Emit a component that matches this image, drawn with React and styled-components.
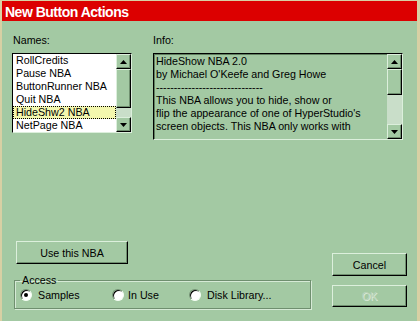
import React from 'react'
import styled, { createGlobalStyle } from 'styled-components'

const GlobalStyle = createGlobalStyle`
  html, body {
    margin: 0;
    padding: 0;
    background: #a3c9a3;
  }
  body {
    font-family: "Liberation Sans", Arial, sans-serif;
  }
`

const names = ['RollCredits', 'Pause NBA', 'ButtonRunner NBA', 'Quit NBA', 'HideShw2 NBA', 'NetPage NBA']

const infoLines = [
  'HideShow NBA 2.0',
  "by Michael O'Keefe and Greg Howe",
  '------------------------------',
  'This NBA allows you to hide, show or',
  "flip the appearance of one of HyperStudio's",
  'screen objects. This NBA only works with',
]

const Arrow = ({ down }) => (
  <svg width="7" height="4" viewBox="0 0 7 4">
    <polygon points={down ? '0,0 7,0 3.5,4' : '0,4 3.5,0 7,4'} fill="#000" />
  </svg>
)

const ScrollBar = ({ thumb }) => (
  <Scroll>
    <Raised $h={15}><Arrow /></Raised>
    <Raised $h={thumb} />
    <Track />
    <Raised $h={15}><Arrow down /></Raised>
  </Scroll>
)

const App = () => {
  return (
    <Window>
      <GlobalStyle />
      <TitleBar>New Button Actions</TitleBar>
      <TopRow>
        <Column>
          <Label $indent={1}>Names:</Label>
          <ListBox>
            <Items>
              {names.map((n, i) => (
                <Item key={n} $selected={i === 4}>{n}</Item>
              ))}
            </Items>
            <ScrollBar thumb={39} />
          </ListBox>
        </Column>
        <Column>
          <Label>Info:</Label>
          <InfoBox>
            <InfoText>
              {infoLines.map((l, i) => (
                <div key={i}>{l}</div>
              ))}
            </InfoText>
            <ScrollBar thumb={26} />
          </InfoBox>
        </Column>
      </TopRow>
      <BottomRow>
        <LeftCol>
          <UseButton>Use this NBA</UseButton>
          <Group>
            <legend>Access</legend>
            <RadioRow>
              <Option $gap={6}><Radio $checked />Samples</Option>
              <Option $gap={4}><Radio />In Use</Option>
              <Option $gap={6}><Radio />Disk Library...</Option>
            </RadioRow>
          </Group>
        </LeftCol>
        <RightCol>
          <DialogButton $h={23}>Cancel</DialogButton>
          <DialogButton $h={22} $disabled>OK</DialogButton>
        </RightCol>
      </BottomRow>
    </Window>
  )
}

const Window = styled.div`
  width: 420px;
  height: 321px;
  box-sizing: border-box;
  background: #a3c9a3;
  box-shadow: inset 2px 1px 0 #d8d0a4, inset -3px 0 0 #d8d0a4;
  font-size: 10.7px;
  color: #000;
  overflow: hidden;
`

const TitleBar = styled.div`
  margin: 1px 3px 0 2px;
  height: 20px;
  box-sizing: border-box;
  padding: 1px 0 0 3px;
  background: #dc0000;
  color: #fff;
  font-weight: bold;
  font-size: 14px;
  letter-spacing: -0.5px;
  line-height: 20px;
  white-space: nowrap;
`

const TopRow = styled.div`
  display: grid;
  grid-template-columns: 120px 250px;
  column-gap: 21px;
  align-items: start;
  padding: 13px 0 0 12px;
`

const Column = styled.div`
  display: flex;
  flex-direction: column;
`

const Label = styled.div`
  line-height: 13px;
  margin-bottom: 6px;
  padding-left: ${(p) => p.$indent || 0}px;
`

const ListBox = styled.div`
  display: flex;
  height: 80px;
  box-sizing: border-box;
  border: 1px solid;
  border-color: #000 #dcefdc #dcefdc #000;
  background: #fff;
`

const Items = styled.div`
  flex: 1;
  overflow: hidden;
`

const Item = styled.div`
  height: 13px;
  line-height: 13px;
  padding-left: 3px;
  white-space: nowrap;
  background: ${(p) => (p.$selected ? '#f3f7ae' : 'transparent')};
  outline: ${(p) => (p.$selected ? '1px dotted #000' : 'none')};
  outline-offset: -1px;
`

const InfoBox = styled.div`
  display: flex;
  height: 87px;
  box-sizing: border-box;
  border: 1px solid;
  border-color: #000 #dcefdc #dcefdc #000;
  box-shadow: inset 1px 1px 0 #5f7f5f;
`

const InfoText = styled.div`
  flex: 1;
  padding: 1px 0 0 2px;
  line-height: 13px;
  white-space: nowrap;
  overflow: hidden;
`

const Scroll = styled.div`
  width: 15px;
  display: flex;
  flex-direction: column;
  background: #c9dec9;
`

const Raised = styled.div`
  height: ${(p) => p.$h}px;
  flex: none;
  box-sizing: border-box;
  display: flex;
  align-items: center;
  justify-content: center;
  background: #a3c9a3;
  border: 1px solid;
  border-color: #dcefdc #000 #000 #dcefdc;
  box-shadow: inset -1px -1px 0 #6f8f6f;
`

const Track = styled.div`
  flex: 1;
`

const BottomRow = styled.div`
  display: flex;
  gap: 21px;
  margin-top: 101px;
  padding-left: 14px;
`

const LeftCol = styled.div`
  display: flex;
  flex-direction: column;
  width: 297px;
`

const buttonLook = `
  box-sizing: border-box;
  background: #a3c9a3;
  border: 1px solid;
  border-color: #dcefdc #000 #000 #dcefdc;
  box-shadow: inset -1px -1px 0 #6f8f6f;
  font-family: "Liberation Sans", Arial, sans-serif;
  font-size: 10.7px;
  color: #000;
  padding: 0;
  text-align: center;
`

const UseButton = styled.button`
  ${buttonLook}
  width: 112px;
  height: 23px;
  margin-left: 2px;
`

const Group = styled.fieldset`
  margin: 10px 0 0 0;
  padding: 1px 0 7px 5px;
  box-sizing: border-box;
  width: 297px;
  border: 1px solid #6f8f6f;
  box-shadow: inset 1px 1px 0 #d6ead6, 1px 1px 0 #d6ead6;

  legend {
    padding: 0 2px;
    margin: 0;
    line-height: 13px;
  }
`

const RadioRow = styled.div`
  display: grid;
  grid-template-columns: 92px 77px auto;
  height: 13px;
  align-items: center;
`

const Option = styled.div`
  display: flex;
  align-items: center;
  gap: ${(p) => p.$gap}px;
  white-space: nowrap;
`

const Radio = styled.span`
  position: relative;
  width: 12px;
  height: 12px;
  box-sizing: border-box;
  border-radius: 50%;
  background: #fff;
  border: 1px solid;
  border-color: #6f8f6f #f4fff4 #f4fff4 #6f8f6f;
  box-shadow: inset 1px 1px 0 #000;

  &::after {
    content: '';
    display: ${(p) => (p.$checked ? 'block' : 'none')};
    position: absolute;
    left: 3px;
    top: 3px;
    width: 4px;
    height: 4px;
    border-radius: 50%;
    background: #000;
  }
`

const RightCol = styled.div`
  display: flex;
  flex-direction: column;
  gap: 9px;
  padding-top: 12px;
`

const DialogButton = styled.button`
  ${buttonLook}
  width: 75px;
  height: ${(p) => p.$h}px;
  color: ${(p) => (p.$disabled ? '#bcd4bc' : '#000')};
  text-shadow: ${(p) => (p.$disabled ? '1px 1px 0 #dcebdc' : 'none')};
`

export default App
